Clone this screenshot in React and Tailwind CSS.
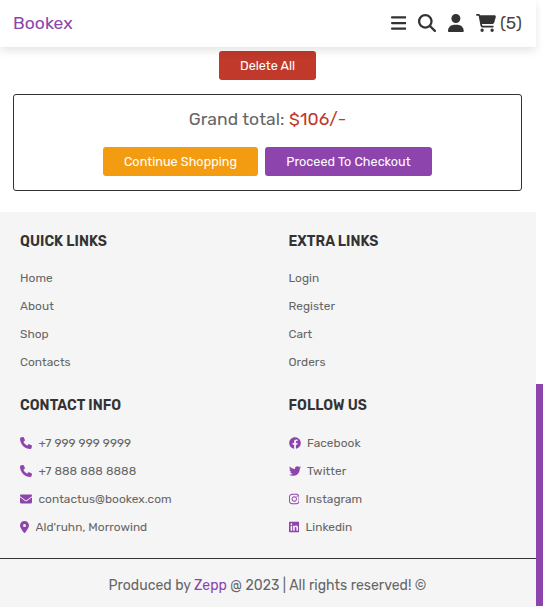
import { FaBars, FaMagnifyingGlass, FaUser, FaCartShopping, FaPhone, FaEnvelope, FaLocationDot, FaTwitter, FaInstagram, FaLinkedin } from "react-icons/fa6";
import { FaFacebook } from "react-icons/fa";

const quickLinks = [{ label: "Home" }, { label: "About" }, { label: "Shop" }, { label: "Contacts" }];

const extraLinks = [{ label: "Login" }, { label: "Register" }, { label: "Cart" }, { label: "Orders" }];

const contacts = [
  { label: "+7 999 999 9999", Icon: FaPhone, size: "w-3" },
  { label: "+7 888 888 8888", Icon: FaPhone, size: "w-3" },
  { label: "contactus@bookex.com", Icon: FaEnvelope, size: "w-3" },
  { label: "Ald'ruhn, Morrowind", Icon: FaLocationDot, size: "w-[9px]" },
];

const socials = [
  { label: "Facebook", Icon: FaFacebook, size: "w-3" },
  { label: "Twitter", Icon: FaTwitter, size: "w-3" },
  { label: "Instagram", Icon: FaInstagram, size: "w-[10.5px]" },
  { label: "Linkedin", Icon: FaLinkedin, size: "w-[10.5px]" },
];

function LinkColumn({ title, items }) {
  return (
    <section>
      <h3 className="h-[23px] text-[14px] leading-[23px] font-semibold tracking-[0.04px] whitespace-nowrap text-[#333]">{title}</h3>
      <ul className="mt-3">
        {items.map(({ label, Icon, size }) => (
          <li key={label} className="flex h-7 items-center text-[11.9px] text-[#666]">
            {Icon && <Icon className={`mr-[6.5px] h-3 shrink-0 text-[#8e44ad] ${size}`} />}
            <span className={`tracking-[0.04px] whitespace-nowrap ${Icon ? "pt-0.5" : ""}`}>{label}</span>
          </li>
        ))}
      </ul>
    </section>
  );
}

export default function App() {
  return (
    <div className="flex h-[607px] w-[543px] overflow-hidden bg-white font-['Rubik','Roboto',sans-serif]">
      <div className="flex w-[536px] flex-col">
        <header className="z-10 flex h-[47px] shrink-0 items-center justify-between bg-white pr-[14px] pb-px pl-[13px] shadow-[0_4px_8px_rgba(0,0,0,0.1)]">
          <a className="text-[17.5px] tracking-[0.06px] text-[#8e44ad]">Bookex</a>
          <nav className="flex items-center text-[#333]">
            <FaBars className="h-[18px] w-[15.75px]" />
            <FaMagnifyingGlass className="ml-3 h-[18px] w-[18px]" />
            <FaUser className="ml-3 h-[18px] w-[15.75px]" />
            <FaCartShopping className="ml-3 h-[18px] w-5" />
            <span className="ml-[4px] w-[22px] text-[17.5px] text-[#444]">(5)</span>
          </nav>
        </header>

        <main className="flex h-[165px] shrink-0 flex-col items-center pt-1 pr-px">
          <button className="h-[29px] w-[97px] rounded-[3px] bg-[#c0392b] pt-0.5 text-[12.6px] text-white">Delete All</button>
          <div className="mt-[14px] flex h-[97px] w-[509px] flex-col items-center rounded-[3px] border border-[#333]">
            <p className="mt-[13px] h-[22px] text-[17.5px] leading-[22px] tracking-[0.07px] text-[#666]">
              Grand total: <span className="text-[#c0392b]">$106/-</span>
            </p>
            <div className="mt-[17px] flex gap-[7px]">
              <button className="h-[29px] w-[155px] rounded-[3px] bg-[#f39c12] pt-0.5 text-[12.6px] tracking-[0.04px] text-white">Continue Shopping</button>
              <button className="h-[29px] w-[167px] rounded-[3px] bg-[#8e44ad] pt-0.5 text-[12.6px] tracking-[0.04px] text-white">Proceed To Checkout</button>
            </div>
          </div>
        </main>

        <footer className="flex-1 bg-[#f5f5f5]">
          <div className="grid h-[347px] grid-cols-[268.5px_1fr] grid-rows-[164px_auto] border-b border-[#333] pt-[18px] pl-5">
            <LinkColumn title="QUICK LINKS" items={quickLinks} />
            <LinkColumn title="EXTRA LINKS" items={extraLinks} />
            <LinkColumn title="CONTACT INFO" items={contacts} />
            <LinkColumn title="FOLLOW US" items={socials} />
          </div>
          <p className="pt-[16px] pr-px text-center text-[14px] leading-[22px] tracking-[0.03px] text-[#666]">
            Produced by <span className="text-[#8e44ad]">Zepp</span> @ 2023 | All rights reserved! ©
          </p>
        </footer>
      </div>
      <div className="flex w-[7px] flex-col justify-end pb-px">
        <div className="h-[222px] bg-[#8e44ad]" />
      </div>
    </div>
  );
}
